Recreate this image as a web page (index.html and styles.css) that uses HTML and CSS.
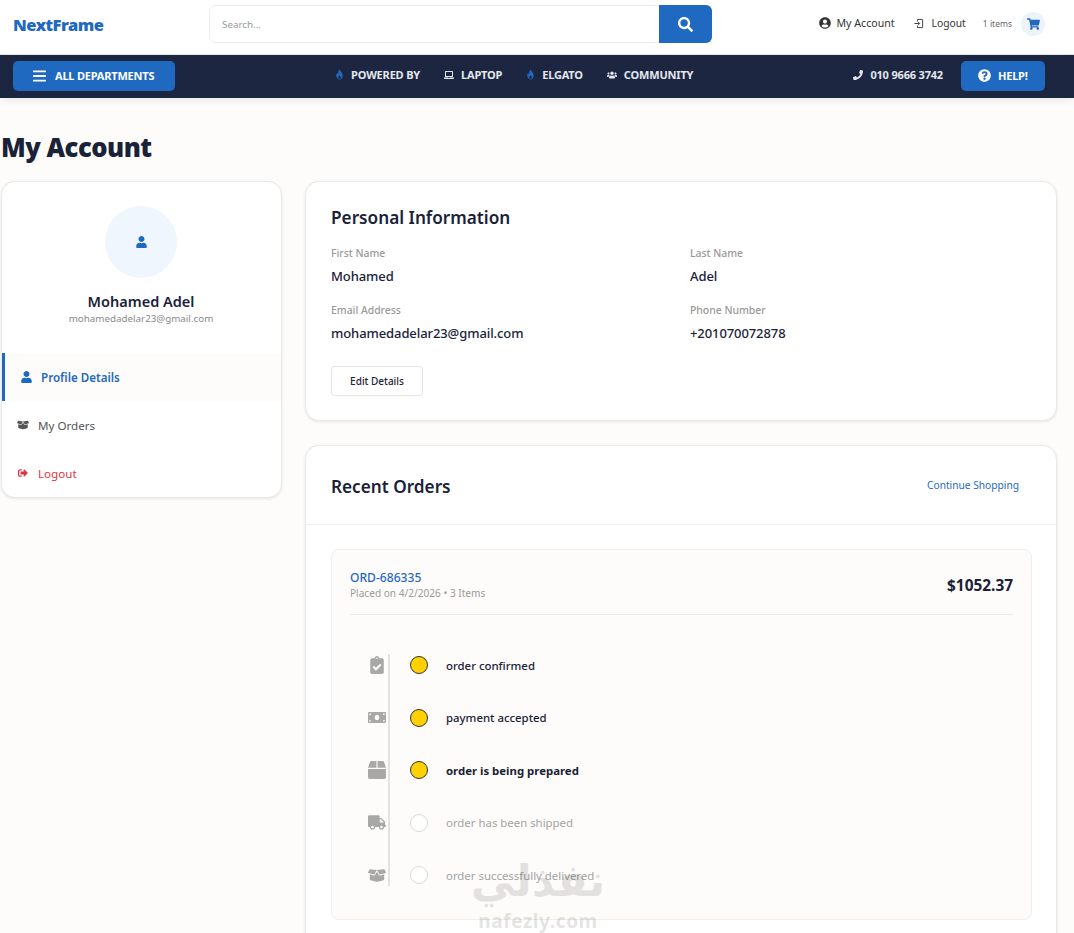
FILE: index.html
```html
<!DOCTYPE html>
<html lang="en">
<head>
<meta charset="utf-8">
<title>My Account</title>
<link rel="stylesheet" href="styles.css">
</head>
<body>
<svg class="defs" aria-hidden="true">
  <symbol id="i-user" viewBox="0 0 448 512"><path d="M224 256c70.7 0 128-57.3 128-128S294.7 0 224 0 96 57.3 96 128s57.3 128 128 128zm89.6 32h-16.7c-22.2 10.2-46.9 16-72.9 16s-50.6-5.8-72.9-16h-16.7C60.2 288 0 348.2 0 422.4V464c0 26.5 21.5 48 48 48h352c26.5 0 48-21.5 48-48v-41.6c0-74.2-60.2-134.4-134.4-134.4z"/></symbol>
  <symbol id="i-search" viewBox="0 0 512 512"><path d="M505 442.7L405.3 343c-4.5-4.5-10.6-7-17-7H372c27.6-35.3 44-79.7 44-128C416 93.1 322.9 0 208 0S0 93.1 0 208s93.1 208 208 208c48.3 0 92.7-16.4 128-44v16.3c0 6.4 2.5 12.5 7 17l99.7 99.7c9.4 9.4 24.6 9.4 33.9 0l28.3-28.3c9.4-9.4 9.4-24.6.1-34zM208 336c-70.7 0-128-57.2-128-128 0-70.7 57.2-128 128-128 70.7 0 128 57.2 128 128 0 70.7-57.2 128-128 128z"/></symbol>
  <symbol id="i-cart" viewBox="0 0 576 512"><path d="M528.12 301.319l47.273-208C578.806 78.301 567.391 64 551.99 64H159.208l-9.166-44.81C147.758 8.021 137.93 0 126.529 0H24C10.745 0 0 10.745 0 24v16c0 13.255 10.745 24 24 24h69.883l70.248 343.435C147.325 417.1 136 435.222 136 456c0 30.928 25.072 56 56 56s56-25.072 56-56c0-15.674-6.447-29.835-16.824-40h209.647C430.447 426.165 424 440.326 424 456c0 30.928 25.072 56 56 56s56-25.072 56-56c0-22.172-12.888-41.332-31.579-50.405l5.517-24.276c3.413-15.018-8.002-29.319-23.403-29.319H218.117l-6.545-32h293.145c11.206 0 20.92-7.754 23.403-18.681z"/></symbol>
  <symbol id="i-phone" viewBox="0 0 512 512"><path d="M493.4 24.6l-104-24c-11.3-2.6-22.9 3.3-27.5 13.9l-48 112c-4.2 9.8-1.4 21.3 6.9 28l60.6 49.6c-36 76.7-98.9 140.5-177.2 177.2l-49.6-60.6c-6.8-8.3-18.2-11.1-28-6.9l-112 48C3.9 366.5-2 378.1.6 389.4l24 104C27.1 504.2 36.7 512 48 512c256.1 0 464-207.5 464-464 0-11.2-7.7-20.9-18.6-23.4z"/></symbol>
  <symbol id="i-help" viewBox="0 0 512 512"><path d="M504 256c0 136.997-111.043 248-248 248S8 392.997 8 256C8 119.083 119.043 8 256 8s248 111.083 248 248zM262.655 90c-54.497 0-89.255 22.957-116.549 63.758-3.536 5.286-2.353 12.415 2.715 16.258l34.699 26.31c5.205 3.947 12.621 3.008 16.665-2.122 17.864-22.658 30.113-35.797 57.303-35.797 20.429 0 45.698 13.148 45.698 32.958 0 14.976-12.363 22.667-32.534 33.976C247.128 238.528 216 254.941 216 296v4c0 6.627 5.373 12 12 12h56c6.627 0 12-5.373 12-12v-1.333c0-28.462 83.186-29.647 83.186-106.667 0-58.002-60.165-102-116.531-102zM256 338c-25.365 0-46 20.635-46 46 0 25.364 20.635 46 46 46s46-20.636 46-46c0-25.365-20.635-46-46-46z"/></symbol>
  <symbol id="i-account" viewBox="0 0 496 512"><path d="M248 8C111 8 0 119 0 256s111 248 248 248 248-111 248-248S385 8 248 8zm0 96c48.6 0 88 39.4 88 88s-39.4 88-88 88-88-39.4-88-88 39.4-88 88-88zm0 344c-58.7 0-111.3-26.6-146.5-68.2 18.8-35.4 55.6-59.8 98.5-59.8 2.4 0 4.8.4 7.1 1.1 13 4.2 26.6 6.9 40.9 6.9 14.3 0 28-2.7 40.9-6.9 2.3-.7 4.7-1.1 7.1-1.1 42.9 0 79.7 24.4 98.5 59.8C359.3 421.4 306.7 448 248 448z"/></symbol>
  <symbol id="i-box" viewBox="0 0 512 512"><path d="M509.5 184.6L458.9 32.8C452.4 13.2 434.1 0 413.4 0H272v192h238.7c-.4-2.5-.4-5-1.2-7.4zM240 0H98.6c-20.7 0-39 13.2-45.5 32.8L2.5 184.6c-.8 2.4-.8 4.9-1.2 7.4H240V0zM0 224v240c0 26.5 21.5 48 48 48h416c26.5 0 48-21.5 48-48V224H0z"/></symbol>
  <symbol id="i-truck" viewBox="0 0 640 512"><path d="M624 352h-16V243.9c0-12.7-5.1-24.9-14.1-33.9L494 110.1c-9-9-21.2-14.1-33.9-14.1H416V48c0-26.5-21.5-48-48-48H48C21.5 0 0 21.5 0 48v320c0 26.5 21.5 48 48 48h16c0 53 43 96 96 96s96-43 96-96h128c0 53 43 96 96 96s96-43 96-96h48c8.8 0 16-7.2 16-16v-32c0-8.8-7.2-16-16-16zM160 464c-26.5 0-48-21.5-48-48s21.5-48 48-48 48 21.5 48 48-21.5 48-48 48zm320 0c-26.5 0-48-21.5-48-48s21.5-48 48-48 48 21.5 48 48-21.5 48-48 48zm80-208H416V144h44.1l99.9 99.9V256z"/></symbol>
  <symbol id="i-boxopen" viewBox="0 0 640 512"><path d="M425.7 256c-16.9 0-32.8-9-41.4-23.4L320 126l-64.2 106.6c-8.7 14.5-24.6 23.5-41.5 23.5-4.5 0-9-.6-13.3-1.9L64 215v178c0 14.7 10 27.5 24.2 31l216.2 54.1c10.2 2.5 20.9 2.5 31 0L551.8 424c14.2-3.6 24.2-16.4 24.2-31V215l-137 39.1c-4.3 1.3-8.8 1.9-13.3 1.9zm212.6-112.2L586.8 41c-3.1-6.2-9.8-9.8-16.7-8.9L320 64l91.7 152.1c3.8 6.3 11.4 9.3 18.5 7.3l197.9-56.5c9.9-2.9 14.7-13.9 9.9-23.1zM53.2 41L1.7 143.8c-4.9 9.2 0 20.2 9.8 23l197.9 56.5c7.1 2 14.7-1 18.5-7.3L320 64 69.8 32.1c-6.9-.8-13.5 2.7-16.6 8.9z"/></symbol>
  <symbol id="i-signout" viewBox="0 0 512 512"><path d="M497 273L329 441c-15 15-41 4.5-41-17v-96H152c-13.3 0-24-10.7-24-24v-96c0-13.3 10.7-24 24-24h136V88c0-21.4 25.9-32 41-17l168 168c9.3 9.4 9.3 24.6 0 34zM192 436v-40c0-6.6-5.4-12-12-12H96c-17.7 0-32-14.3-32-32V160c0-17.7 14.3-32 32-32h84c6.6 0 12-5.4 12-12V76c0-6.6-5.4-12-12-12H96c-53 0-96 43-96 96v192c0 53 43 96 96 96h84c6.6 0 12-5.4 12-12z"/></symbol>
  <symbol id="i-clip" viewBox="0 0 384 512"><path d="M336 64h-80c0-35.3-28.7-64-64-64s-64 28.7-64 64H48C21.5 64 0 85.5 0 112v352c0 26.5 21.5 48 48 48h288c26.5 0 48-21.5 48-48V112c0-26.5-21.5-48-48-48zM192 40c13.3 0 24 10.7 24 24s-10.7 24-24 24-24-10.7-24-24 10.7-24 24-24zm121.2 231.8l-143 141.8c-4.7 4.7-12.3 4.6-17-.1l-82.6-83.3c-4.7-4.7-4.6-12.3.1-17L99.1 285c4.7-4.7 12.3-4.6 17 .1l46 46.4 106-105.2c4.7-4.7 12.3-4.6 17 .1l28.2 28.4c4.7 4.8 4.6 12.3-.1 17z"/></symbol>
  <symbol id="i-money" viewBox="0 0 640 512"><path d="M608 64H32C14.33 64 0 78.33 0 96v320c0 17.67 14.33 32 32 32h576c17.67 0 32-14.33 32-32V96c0-17.67-14.33-32-32-32zM48 400v-64c35.35 0 64 28.65 64 64H48zm0-224v-64h64c0 35.35-28.65 64-64 64zm272 176c-44.19 0-80-42.99-80-96 0-53.02 35.82-96 80-96s80 42.98 80 96c0 53.03-35.83 96-80 96zm272 48h-64c0-35.35 28.65-64 64-64v64zm0-224c-35.35 0-64-28.65-64-64h64v64z"/></symbol>
  <symbol id="i-users" viewBox="0 0 640 512"><path d="M96 224c35.3 0 64-28.7 64-64s-28.7-64-64-64-64 28.7-64 64 28.7 64 64 64zm448 0c35.3 0 64-28.7 64-64s-28.7-64-64-64-64 28.7-64 64 28.7 64 64 64zm32 32h-64c-17.6 0-33.5 7.1-45.1 18.6 40.3 22.1 68.9 62 75.1 109.4h66c17.7 0 32-14.3 32-32v-32c0-35.3-28.7-64-64-64zm-256 0c61.9 0 112-50.1 112-112S381.9 32 320 32 208 82.1 208 144s50.1 112 112 112zm76.8 32h-8.3c-20.8 10-43.9 16-68.5 16s-47.6-6-68.5-16h-8.3C179.6 288 128 339.6 128 403.2V432c0 26.5 21.5 48 48 48h288c26.5 0 48-21.5 48-48v-28.8c0-63.6-51.6-115.2-115.2-115.2zm-223.7-13.4C161.5 263.1 145.6 256 128 256H64c-35.3 0-64 28.7-64 64v32c0 17.7 14.3 32 32 32h65.9c6.3-47.4 34.9-87.3 75.2-109.4z"/></symbol>
  <symbol id="i-fire" viewBox="0 0 448 512"><path d="M232 8c14 74 132 146 152 268 14 118-66 228-162 228S46 410 62 286c8-56 34-92 58-118 2 40 18 66 40 76C150 150 180 60 232 8zm-6 282c-22 32-68 62-68 118 0 36 30 64 66 64s68-28 68-66c0-42-40-76-66-116z"/></symbol>
  <symbol id="i-laptop" viewBox="0 0 640 512"><path d="M624 416H381.5c-.7 19.8-14.7 32-32.7 32H288c-18.7 0-33-17.5-32.8-32H16c-8.8 0-16 7.2-16 16v16c0 35.2 28.8 64 64 64h512c35.2 0 64-28.8 64-64v-16c0-8.8-7.2-16-16-16zM576 48c0-26.4-21.6-48-48-48H112C85.6 0 64 21.6 64 48v336h512V48zm-64 272H128V64h384v256z"/></symbol>
  <symbol id="i-login" viewBox="0 0 24 24"><path d="M10 3h10a1 1 0 0 1 1 1v16a1 1 0 0 1-1 1H10M10 21v-4M10 3v4M3 12h11M10.500 8l4 4-4 4" fill="none" stroke="currentColor" stroke-width="2"/></symbol>
</svg>

<header class="topbar">
  <a class="logo">NextFrame</a>
  <form class="search">
    <span class="search-text">Search...</span>
    <span class="search-btn"><svg class="ic ic-search"><use href="#i-search"/></svg></span>
  </form>
  <div class="top-actions">
    <a class="top-link"><svg class="ic ic-13"><use href="#i-account"/></svg>My Account</a>
    <a class="top-link logout-link"><svg class="ic ic-login"><use href="#i-login"/></svg>Logout</a>
    <span class="items">1 items</span>
    <span class="cart"><svg class="ic ic-cart"><use href="#i-cart"/></svg></span>
  </div>
</header>

<nav class="navbar">
  <a class="nav-btn dept"><svg class="bars" viewBox="0 0 14 12"><rect y="0" width="14" height="2" rx=".5"/><rect y="5" width="14" height="2" rx=".5"/><rect y="10" width="14" height="2" rx=".5"/></svg>ALL DEPARTMENTS</a>
  <div class="nav-links">
    <a class="nav-link"><svg class="ic ic-fire"><use href="#i-fire"/></svg>POWERED BY</a>
    <a class="nav-link"><svg class="ic ic-laptop"><use href="#i-laptop"/></svg>LAPTOP</a>
    <a class="nav-link"><svg class="ic ic-fire"><use href="#i-fire"/></svg>ELGATO</a>
    <a class="nav-link"><svg class="ic ic-laptop"><use href="#i-users"/></svg>COMMUNITY</a>
  </div>
  <div class="nav-right">
    <a class="nav-link"><svg class="ic ic-phone"><use href="#i-phone"/></svg>010 9666 3742</a>
    <a class="nav-btn help"><svg class="ic ic-help"><use href="#i-help"/></svg>HELP!</a>
  </div>
</nav>

<main class="page">
  <h1 class="title">My Account</h1>
  <div class="layout">
    <aside class="card sidebar">
      <div class="profile">
        <div class="avatar"><svg class="ic ic-avatar"><use href="#i-user"/></svg></div>
        <div class="name">Mohamed Adel</div>
        <div class="mail">mohamedadelar23@gmail.com</div>
      </div>
      <a class="menu-item active"><svg class="ic ic-menu-user"><use href="#i-user"/></svg>Profile Details</a>
      <a class="menu-item"><svg class="ic ic-menu"><use href="#i-boxopen"/></svg>My Orders</a>
      <a class="menu-item danger"><svg class="ic ic-menu"><use href="#i-signout"/></svg>Logout</a>
    </aside>

    <div class="main-col">
      <section class="card info">
        <h2 class="heading">Personal Information</h2>
        <div class="fields">
          <div class="field"><div class="label">First Name</div><div class="value">Mohamed</div></div>
          <div class="field"><div class="label">Last Name</div><div class="value">Adel</div></div>
          <div class="field"><div class="label">Email Address</div><div class="value">mohamedadelar23@gmail.com</div></div>
          <div class="field"><div class="label">Phone Number</div><div class="value">+201070072878</div></div>
        </div>
        <button class="edit" type="button">Edit Details</button>
      </section>

      <section class="card orders">
        <div class="orders-head">
          <h2 class="heading">Recent Orders</h2>
          <a class="continue">Continue Shopping</a>
        </div>
        <div class="orders-body">
          <article class="order">
            <div class="order-top">
              <div>
                <div class="order-id">ORD-686335</div>
                <div class="order-meta">Placed on 4/2/2026 • 3 Items</div>
              </div>
              <div class="order-total">$1052.37</div>
            </div>
            <ol class="timeline">
              <li class="step done"><span class="step-icon"><svg class="ic ic-clip"><use href="#i-clip"/></svg></span><span class="dot"></span><span class="step-text">order confirmed</span></li>
              <li class="step done"><span class="step-icon"><svg class="ic ic-wide"><use href="#i-money"/></svg></span><span class="dot"></span><span class="step-text">payment accepted</span></li>
              <li class="step done current"><span class="step-icon"><svg class="ic ic-boxicon"><use href="#i-box"/></svg></span><span class="dot"></span><span class="step-text">order is being prepared</span></li>
              <li class="step"><span class="step-icon"><svg class="ic ic-wide"><use href="#i-truck"/></svg></span><span class="dot"></span><span class="step-text">order has been shipped</span></li>
              <li class="step"><span class="step-icon"><svg class="ic ic-wide"><use href="#i-boxopen"/></svg></span><span class="dot"></span><span class="step-text">order successfully delivered</span></li>
            </ol>
          </article>
        </div>
      </section>
    </div>
  </div>
</main>

<div class="watermark"><div class="wm-ar" lang="ar" dir="rtl">نفذلي</div><div class="wm-en">nafezly.com</div></div>
</body>
</html>
```
FILE: styles.css
```css
* { box-sizing: border-box; }
html, body { height: 100%; }
body {
  margin: 0;
  overflow: hidden;
  background: #fefcfa;
  color: #1a2238;
  font-family: "Noto Sans", "Open Sans", sans-serif;
  position: relative;
}
.defs { display: none; }
.ic { display: block; fill: currentColor; flex: none; }
h1, h2 { margin: 0; }
ol { list-style: none; margin: 0; padding: 0; }

.topbar {
  height: 55px;
  background: #fff;
  border-bottom: 1px solid #e8e8e8;
  display: flex;
  align-items: center;
  padding: 0 29px 7px 13px;
}
.logo {
  width: 196px;
  color: #1f69c0;
  font: 900 16.5px/1 "Noto Sans", sans-serif;
  letter-spacing: -.5px;
  padding-top: 3px;
}
.search {
  width: 503px;
  height: 38px;
  margin-top: 1px;
  display: flex;
  justify-content: space-between;
  align-items: center;
  background: #fff;
  border: 1px solid #ececec;
  border-radius: 6px;
}
.search-text { padding-left: 12px; font-size: 9.8px; color: #9a9a9a; }
.search-btn {
  width: 53px;
  height: 38px;
  margin: 0 -1px 0 0;
  background: #1f69c0;
  border-radius: 0 6px 6px 0;
  color: #fff;
  display: flex;
  align-items: center;
  justify-content: center;
}
.ic-search { width: 15px; height: 15px; }
.top-actions { margin-left: auto; display: flex; align-items: center; }
.top-link {
  display: flex;
  align-items: center;
  gap: 6px;
  font-size: 10.6px;
  color: #333;
  margin-right: 18px;
  margin-top: -1px;
}
.logout-link { gap: 8px; margin-right: 17px; font-size: 10.3px; }
.ic-13 { width: 12px; height: 12px; }
.ic-login { width: 11px; height: 11px; }
.items { font-size: 8.5px; color: #666; margin-right: 9px; }
.cart {
  width: 24px;
  height: 24px;
  border-radius: 50%;
  background: #edf3fb;
  color: #1f69c0;
  display: flex;
  align-items: center;
  justify-content: center;
}
.ic-cart { width: 13px; height: 12px; }

.navbar {
  height: 43px;
  background: #1c2640;
  display: flex;
  align-items: center;
  justify-content: space-between;
  padding: 0 29px 0 13px;
  box-shadow: 0 2px 8px rgba(0,0,0,.08);
  position: relative;
}
.nav-btn {
  height: 30px;
  margin-top: -1px;
  padding-bottom: 1px;
  background: #1f69c0;
  border-radius: 5px;
  color: #fff;
  display: flex;
  align-items: center;
  font-size: 11px;
  font-weight: 700;
  letter-spacing: -.2px;
}
.dept { width: 162px; padding-left: 20px; gap: 9px; }
.bars { width: 13px; height: 12px; fill: #fff; }
.help { width: 84px; padding-left: 17px; gap: 7px; }
.ic-help { width: 13px; height: 13px; }
.nav-links { display: flex; gap: 24px; }
.nav-link {
  display: flex;
  align-items: center;
  gap: 7px;
  color: #e4e7ee;
  font-size: 11px;
  font-weight: 700;
  letter-spacing: -.18px;
  margin-top: -4px;
}
.ic-fire { width: 9px; height: 11px; color: #1f69c0; }
.ic-laptop { width: 10px; height: 8px; }
.nav-right { display: flex; align-items: center; gap: 18px; }
.ic-phone { width: 10px; height: 10px; }

.page { padding: 0 16px 0 1px; }
.title {
  font-size: 25.6px;
  line-height: 36px;
  font-weight: 900;
  letter-spacing: -.5px;
  padding-top: 32px;
  margin-bottom: 15px;
  color: #1a2238;
}
.layout { display: grid; grid-template-columns: 281px 752px; gap: 23px; align-items: start; }
.card {
  background: #fff;
  border: 1px solid #e9e9e9;
  border-radius: 14px;
  box-shadow: 0 1px 3px rgba(0,0,0,.09);
}
.sidebar { height: 317px; overflow: hidden; }
.profile { height: 171px; padding: 24px 1px 0 0; display: flex; flex-direction: column; align-items: center; }
.avatar {
  width: 72px;
  height: 72px;
  border-radius: 50%;
  background: #f0f6fd;
  color: #1f69c0;
  display: flex;
  align-items: center;
  justify-content: center;
}
.ic-avatar { width: 11px; height: 12px; }
.name { margin-top: 13px; font-size: 14.5px; line-height: 20px; font-weight: 600; }
.mail { font-size: 9.8px; line-height: 14px; color: #8a8a8a; margin-top: 1px; }
.menu-item {
  height: 48px;
  display: flex;
  align-items: center;
  gap: 9px;
  padding-left: 15px;
  font-size: 11.6px;
  color: #555;
}
.menu-item.active {
  background: #fefcfa;
  border-left: 3px solid #1f69c0;
  padding-left: 16px;
  color: #1f69c0;
  font-weight: 600;
}
.menu-item.danger { color: #dc3545; }
.ic-menu-user { width: 11px; height: 12px; }
.ic-menu { width: 12px; height: 10px; }

.main-col { display: flex; flex-direction: column; gap: 24px; }
.heading { font-size: 17.2px; line-height: 24px; font-weight: 600; color: #1a2238; }
.info { height: 240px; padding: 24px 25px; }
.fields { display: grid; grid-template-columns: 359px 1fr; row-gap: 9px; margin-top: 16px; }
.field { height: 48px; }
.label { font-size: 10.4px; line-height: 14px; color: #999; font-weight: 500; }
.value { font-size: 13px; line-height: 18px; margin-top: 7px; color: #1a2238; font-weight: 500; letter-spacing: -.09px; }
.edit {
  display: block;
  margin-top: 15px;
  width: 92px;
  height: 30px;
  padding: 0;
  font: 500 10px "Noto Sans", sans-serif;
  color: #1a2238;
  background: #fff;
  border: 1px solid #e6e6e6;
  border-radius: 3px;
}
.orders { height: 520px; }
.orders-head {
  height: 79px;
  padding: 3px 37px 0 25px;
  display: flex;
  align-items: center;
  justify-content: space-between;
  border-bottom: 1px solid #eee;
}
.continue { font-size: 10.2px; color: #1f69c0; margin-top: -3px; }
.orders-body { padding: 24px 24px 24px 25px; }
.order {
  height: 371px;
  background: #fefcfa;
  border: 1px solid #efefef;
  border-radius: 8px;
  padding: 17px 18px 0;
}
.order-top {
  height: 48px;
  display: flex;
  justify-content: space-between;
  align-items: center;
  border-bottom: 1px solid #eaeaea;
  padding-bottom: 12px;
}
.order-id { font-size: 12.1px; line-height: 16px; font-weight: 500; color: #1f69c0; }
.order-meta { font-size: 10.1px; line-height: 14px; color: #9a9a9a; }
.order-total { font-size: 15.4px; font-weight: 700; color: #1a2238; margin-top: 1px; }
.timeline {
  margin-top: 29px;
  position: relative;
  display: flex;
  flex-direction: column;
  gap: 16.5px;
  padding-top: 3px;
}
.timeline::before {
  content: "";
  position: absolute;
  left: 38px;
  top: 10px;
  bottom: 7px;
  width: 2px;
  background: #e2e2e2;
}
.step { height: 36px; display: flex; align-items: center; color: #a3a3a3; font-size: 11.4px; }
.step.done { color: #1a2238; font-weight: 500; }
.step.current { font-weight: 700; }
.step-icon {
  width: 39px;
  margin-right: 21px;
  padding-left: 18px;
  color: #a8a8a8;
  display: flex;
  align-items: center;
}
.ic-clip { width: 14px; height: 18px; margin-left: 2px; }
.ic-wide { width: 18px; height: 15px; }
.ic-boxicon { width: 18px; height: 18px; }
.dot {
  width: 18px;
  height: 18px;
  border-radius: 50%;
  border: 1px solid #d9d9d9;
  background: #fff;
  margin-right: 18px;
}
.step.done .dot { background: #ffd100; border-color: #333; }

.watermark {
  position: absolute;
  left: 470px;
  top: 858px;
  width: 136px;
  text-align: center;
  color: #000;
  opacity: .1;
  pointer-events: none;
}
.wm-ar { font: 700 44px/46px "DejaVu Sans", sans-serif; }
.wm-en { font: 700 19px/22px "Noto Sans", sans-serif; letter-spacing: .6px; margin-top: 6px; }
```
